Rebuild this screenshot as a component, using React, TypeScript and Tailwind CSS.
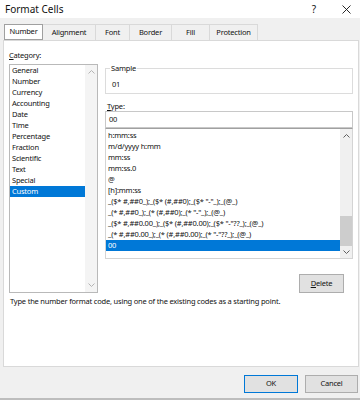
import React from 'react';

const categories = [
  'General',
  'Number',
  'Currency',
  'Accounting',
  'Date',
  'Time',
  'Percentage',
  'Fraction',
  'Scientific',
  'Text',
  'Special',
  'Custom',
];

const formats = [
  'h:mm:ss',
  'm/d/yyyy h:mm',
  'mm:ss',
  'mm:ss.0',
  '@',
  '[h]:mm:ss',
  '_($* #,##0_);_($* (#,##0);_($* "-"_);_(@_)',
  '_(* #,##0_);_(* (#,##0);_(* "-"_);_(@_)',
  '_($* #,##0.00_);_($* (#,##0.00);_($* "-"??_);_(@_)',
  '_(* #,##0.00_);_(* (#,##0.00);_(* "-"??_);_(@_)',
  '00',
];

const tabs = [
  { label: 'Number', w: 'w-[39px]' },
  { label: 'Alignment', w: 'w-[53px]' },
  { label: 'Font', w: 'w-[34px]' },
  { label: 'Border', w: 'w-[42px]' },
  { label: 'Fill', w: 'w-[38px]' },
  { label: 'Protection', w: 'w-[48px]' },
];

function Chevron({ up, color }: { up?: boolean; color: string }) {
  return (
    <svg width="7" height="4" viewBox="0 0 7 4">
      <polyline
        points={up ? '0.5,3.5 3.5,0.5 6.5,3.5' : '0.5,0.5 3.5,3.5 6.5,0.5'}
        fill="none"
        stroke={color}
        strokeWidth="1"
      />
    </svg>
  );
}

export default function App() {
  return (
    <div className="w-[360px] h-[400px] overflow-hidden bg-[#f0f0f0] flex flex-col text-[#111] font-['Noto_Sans',sans-serif] tracking-[-0.2px]">
      {/* Title bar */}
      <div className="h-[18px] bg-white flex items-center justify-between">
        <span className="pl-[5px] text-[10px] leading-none tracking-normal">Format Cells</span>
        <div className="flex items-center gap-[26px] pr-[9px]">
          <span className="text-[10px] leading-none">?</span>
          <svg width="9" height="9" viewBox="0 0 9 9">
            <path d="M0.5 0.5 L8.5 8.5 M8.5 0.5 L0.5 8.5" stroke="#111" strokeWidth="0.9" />
          </svg>
        </div>
      </div>

      {/* Tabs */}
      <div className="mt-[6px] pl-[4px] flex h-[16px] text-[7.5px]">
        {tabs.map((t, i) => (
          <div
            key={t.label}
            className={`${t.w} flex items-center justify-center ${
              i === 0
                ? 'bg-white border border-[#a0a0a0]'
                : 'border-t border-r border-[#d9d9d9]'
            }`}
          >
            {t.label}
          </div>
        ))}
      </div>

      {/* Panel */}
      <div className="ml-[3px] w-[356px] h-[327px] bg-white border border-[#d9d9d9] pl-[5px] pr-[4px] pt-[9px] text-[7.5px]">
        <div className="flex gap-[7px]">
          {/* Category */}
          <div className="w-[89px] flex flex-col">
            <div className="h-[11px] leading-[11px]">
              <span className="underline">C</span>ategory:
            </div>
            <div className="mt-[3px] h-[229px] border border-[#b9b9b9] flex">
              <div className="flex-1 flex flex-col">
                {categories.map((c) => (
                  <div
                    key={c}
                    className={`h-[11px] leading-[11px] pl-[2px] ${
                      c === 'Custom' ? 'bg-[#0078d7] text-white' : ''
                    }`}
                  >
                    {c}
                  </div>
                ))}
              </div>
              <div className="w-[12px] bg-[#f4f4f4] flex flex-col justify-between items-center py-[5px]">
                <Chevron up color="#b4b4b4" />
                <Chevron color="#b4b4b4" />
              </div>
            </div>
          </div>

          {/* Right column */}
          <div className="w-[248px] flex flex-col">
            <fieldset className="mt-[13px] border border-[#dcdcdc] px-[4px] pb-[3px] m-0">
              <legend className="px-[1px] leading-[11px]">Sample</legend>
              <div className="mt-[5px] pl-[2px] leading-[11px]">01</div>
            </fieldset>
            <div className="mt-[7px] h-[10px] leading-[10px] pl-[2px]">
              <span className="underline">T</span>ype:
            </div>
            <div className="h-[17px] border border-[#c8c8c8] flex items-center pl-[3px]">00</div>
            <div className="h-[131px] border border-[#d4d4d4] border-t-[#a0a0a0] flex">
              <div className="flex-1 pt-[1px] flex flex-col">
                {formats.map((f) => (
                  <div
                    key={f}
                    className={`h-[11px] leading-[11px] pl-[2px] whitespace-pre ${
                      f === '00' ? 'bg-[#0078d7] text-white' : ''
                    }`}
                  >
                    {f}
                  </div>
                ))}
              </div>
              <div className="w-[12px] bg-[#f0f0f0] flex flex-col">
                <div className="h-[14px] flex items-center justify-center">
                  <Chevron up color="#606060" />
                </div>
                <div className="flex-1 flex flex-col justify-end">
                  <div className="h-[30px] bg-[#cdcdcd]" />
                </div>
                <div className="h-[12px] flex items-center justify-center">
                  <Chevron color="#606060" />
                </div>
              </div>
            </div>
            <div className="mt-[15px] self-end mr-[9px] w-[45px] h-[19px] bg-[#e1e1e1] border border-[#adadad] flex items-center justify-center">
              <span>
                <span className="underline">D</span>elete
              </span>
            </div>
          </div>
        </div>
        <div className="mt-[3px] pl-[1px] leading-[11px]">
          Type the number format code, using one of the existing codes as a starting point.
        </div>
      </div>

      {/* Buttons */}
      <div className="mt-[8px] flex justify-end gap-[7px] pr-[2px] text-[7.5px]">
        <div className="w-[54px] h-[18px] bg-[#e1e1e1] border border-[#0078d7] flex items-center justify-center">
          OK
        </div>
        <div className="w-[53px] h-[18px] bg-[#e1e1e1] border border-[#adadad] flex items-center justify-center">
          Cancel
        </div>
      </div>
      <div className="mt-auto h-[2px] bg-[#bdbdbd]" />
    </div>
  );
}
